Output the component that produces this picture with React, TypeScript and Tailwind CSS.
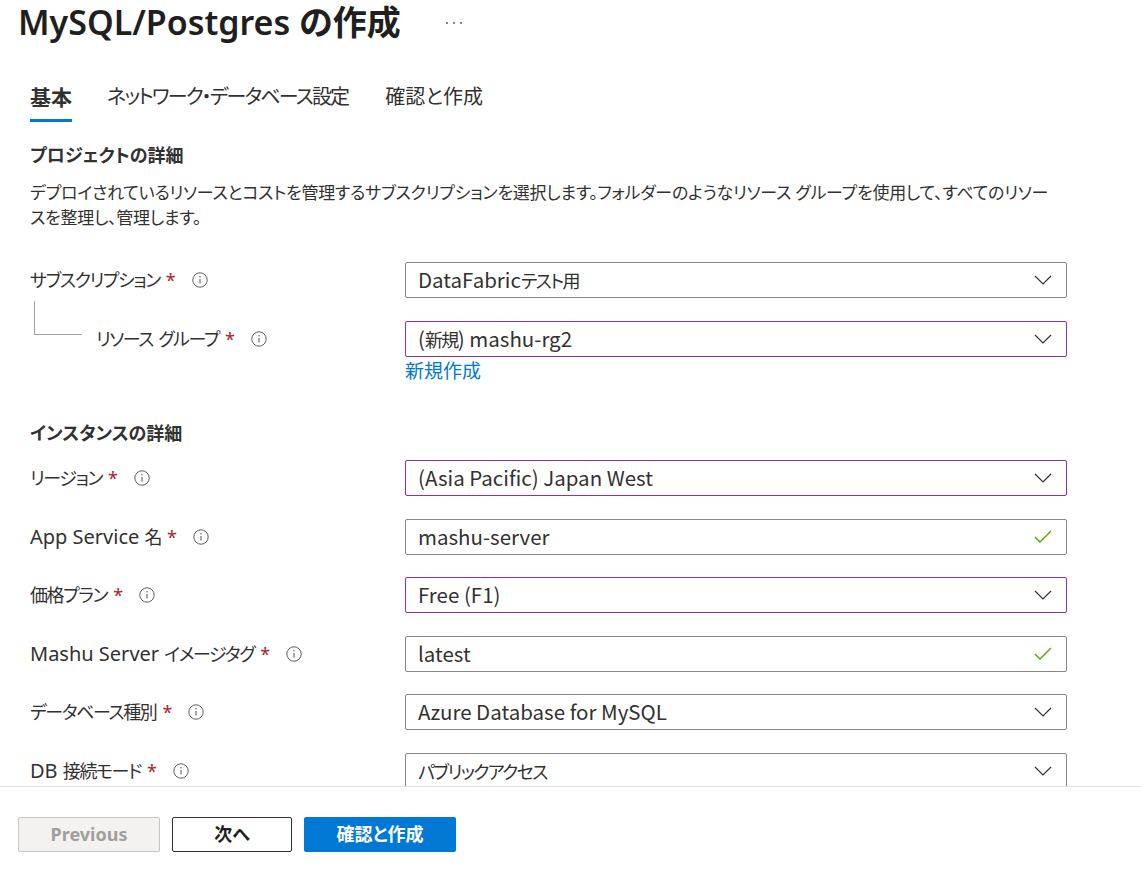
import React from "react";

const SANS = "[font-family:'Noto_Sans','Noto_Sans_CJK_JP',sans-serif] [font-feature-settings:'palt']";
const CJK = "[font-family:'Noto_Sans_CJK_JP','Noto_Sans',sans-serif] [font-feature-settings:'palt']";

function Mixed({ text, latin, jp }: { text: string; latin: string; jp: string }) {
  const parts = text.split(/([\x20-\x7E]+)/).filter((p) => p.length > 0);
  return (
    <>
      {parts.map((p, i) =>
        /^[\x20-\x7E]+$/.test(p) ? (
          <span key={i} className={latin}>
            {p}
          </span>
        ) : (
          <span key={i} className={jp}>
            {p}
          </span>
        )
      )}
    </>
  );
}

function InfoIcon() {
  return (
    <svg width="16" height="16" viewBox="0 0 16 16" className="shrink-0">
      <circle cx="8" cy="8" r="7.2" fill="none" stroke="#605e5c" strokeWidth="1" />
      <line x1="8" y1="6.9" x2="8" y2="11.6" stroke="#605e5c" strokeWidth="1.1" />
      <circle cx="8" cy="4.8" r="0.75" fill="#605e5c" />
    </svg>
  );
}

function Chevron() {
  return (
    <svg width="18" height="10" viewBox="0 0 18 10" className="shrink-0">
      <polyline points="1,1 9,9 17,1" fill="none" stroke="#323130" strokeWidth="1.2" />
    </svg>
  );
}

function Check() {
  return (
    <svg width="18" height="14" viewBox="0 0 18 14" className="shrink-0">
      <polyline points="1,7 6,12 17,1" fill="none" stroke="#57a300" strokeWidth="1.4" />
    </svg>
  );
}

type Row = {
  label: string;
  value: string;
  kind: "select" | "check";
  purple?: boolean;
  mt: string;
};

function Label({ text }: { text: string }) {
  return (
    <div className="flex items-center text-[#323130]">
      <span className="whitespace-nowrap leading-[26px]">
        <Mixed
          text={text}
          latin={`text-[20px] [font-family:'Noto_Sans',sans-serif]`}
          jp={`text-[18px] tracking-[-1.4px] ${CJK}`}
        />
      </span>
      <span className="ml-[6px] text-[#a4262c] text-[18px] leading-none">*</span>
      <span className="ml-[16px] flex items-center">
        <InfoIcon />
      </span>
    </div>
  );
}

function Box({ value, kind, purple }: { value: string; kind: "select" | "check"; purple?: boolean }) {
  return (
    <div
      className={`w-[662px] h-[36px] flex items-center justify-between pl-[12px] pr-[14px] rounded-[2px] border bg-white ${
        purple ? "border-[#8b2fb3]" : "border-[#8a8886]"
      }`}
    >
      <span className={`text-[#323130] whitespace-nowrap leading-[26px] ${CJK}`}>
        <Mixed text={value} latin="text-[20.5px]" jp="text-[18px] tracking-[-1.6px]" />
      </span>
      {kind === "select" ? <Chevron /> : <Check />}
    </div>
  );
}

const instanceRows: Row[] = [
  { label: "リージョン", value: "(Asia Pacific) Japan West", kind: "select", purple: true, mt: "mt-[14px]" },
  { label: "App Service 名", value: "mashu-server", kind: "check", mt: "mt-[23px]" },
  { label: "価格プラン", value: "Free (F1)", kind: "select", purple: true, mt: "mt-[22px]" },
  { label: "Mashu Server イメージタグ", value: "latest", kind: "check", mt: "mt-[23px]" },
  { label: "データベース種別", value: "Azure Database for MySQL", kind: "select", mt: "mt-[22px]" },
  { label: "DB 接続モード", value: "パブリックアクセス", kind: "select", mt: "mt-[23px]" },
];

export default function App() {
  return (
    <div className={`w-[1141px] h-[871px] bg-white flex flex-col overflow-hidden text-[#323130] ${SANS}`}>
      <main className="h-[786px] overflow-hidden shrink-0">
        {/* Title */}
        <div className="h-[44px] pl-[18px] flex items-center">
          <h1 className="text-[34px] font-semibold leading-[44px] text-[#201f1e] whitespace-nowrap">
            MySQL/Postgres の作成
          </h1>
          <div className="ml-[45px] flex items-center gap-[5px] mt-[2px]">
            <span className="w-[2px] h-[2px] rounded-full bg-[#605e5c]" />
            <span className="w-[2px] h-[2px] rounded-full bg-[#605e5c]" />
            <span className="w-[2px] h-[2px] rounded-full bg-[#605e5c]" />
          </div>
        </div>

        <div className="pl-[30px]">
          {/* Tabs */}
          <div className="mt-[40px] flex items-start">
            <div className="flex flex-col">
              <span className="leading-[26px] text-[21px] font-bold text-[#323130]">基本</span>
              <span className="mt-[9px] h-[3px] bg-[#0078d4]" />
            </div>
            <span className="ml-[35px] leading-[26px] text-[20px] tracking-[-1.8px] text-[#323130]">
              ネットワーク・データベース設定
            </span>
            <span className="ml-[37px] leading-[26px] text-[20px] text-[#323130]">確認と作成</span>
          </div>

          {/* Project details */}
          <h2 className="mt-[20px] text-[18px] font-bold leading-[26px] text-[#323130]">プロジェクトの詳細</h2>
          <div className="mt-[12px] text-[17px] tracking-[-0.25px] leading-[25px] text-[#323130]">
            <div className="whitespace-nowrap">
              デプロイされているリソースとコストを管理するサブスクリプションを選択します。フォルダーのようなリソース グループを使用して、すべてのリソー
            </div>
            <div className="whitespace-nowrap">スを整理し、管理します。</div>
          </div>

          <div className="mt-[32px] flex items-center">
            <div className="w-[375px]">
              <Label text="サブスクリプション" />
            </div>
            <Box value="DataFabricテスト用" kind="select" />
          </div>

          <div className="mt-[23px] flex items-center relative">
            <div className="absolute left-[4px] top-[-20px] w-[48px] h-[34px] border-l border-b border-[#a19f9d]" />
            <div className="w-[375px] pl-[66px]">
              <Label text="リソース グループ" />
            </div>
            <Box value="(新規) mashu-rg2" kind="select" purple />
          </div>
          <div className="pl-[375px] mt-[3px]">
            <span className="text-[19px] leading-[22px] text-[#0078d4]">新規作成</span>
          </div>

          {/* Instance details */}
          <h2 className="mt-[36px] text-[18px] font-bold leading-[26px] text-[#323130]">インスタンスの詳細</h2>

          {instanceRows.map((r) => (
            <div key={r.label} className={`${r.mt} flex items-center`}>
              <div className="w-[375px]">
                <Label text={r.label} />
              </div>
              <Box value={r.value} kind={r.kind} purple={r.purple} />
            </div>
          ))}
        </div>
      </main>

      <footer className="flex-1 border-t border-[#e1dfdd] pl-[18px] pt-[30px] flex items-start gap-[12px]">
        <button className="w-[142px] h-[35px] rounded-[2px] border border-[#c8c6c4] bg-[#f3f2f1] text-[#a19f9d] text-[18px] font-bold">
          Previous
        </button>
        <button className="w-[120px] h-[35px] rounded-[2px] border border-[#323130] bg-white text-[#201f1e] text-[18px] font-bold">
          次へ
        </button>
        <button className="w-[152px] h-[35px] rounded-[2px] bg-[#0078d4] text-white text-[18px] font-bold">
          確認と作成
        </button>
      </footer>
    </div>
  );
}
